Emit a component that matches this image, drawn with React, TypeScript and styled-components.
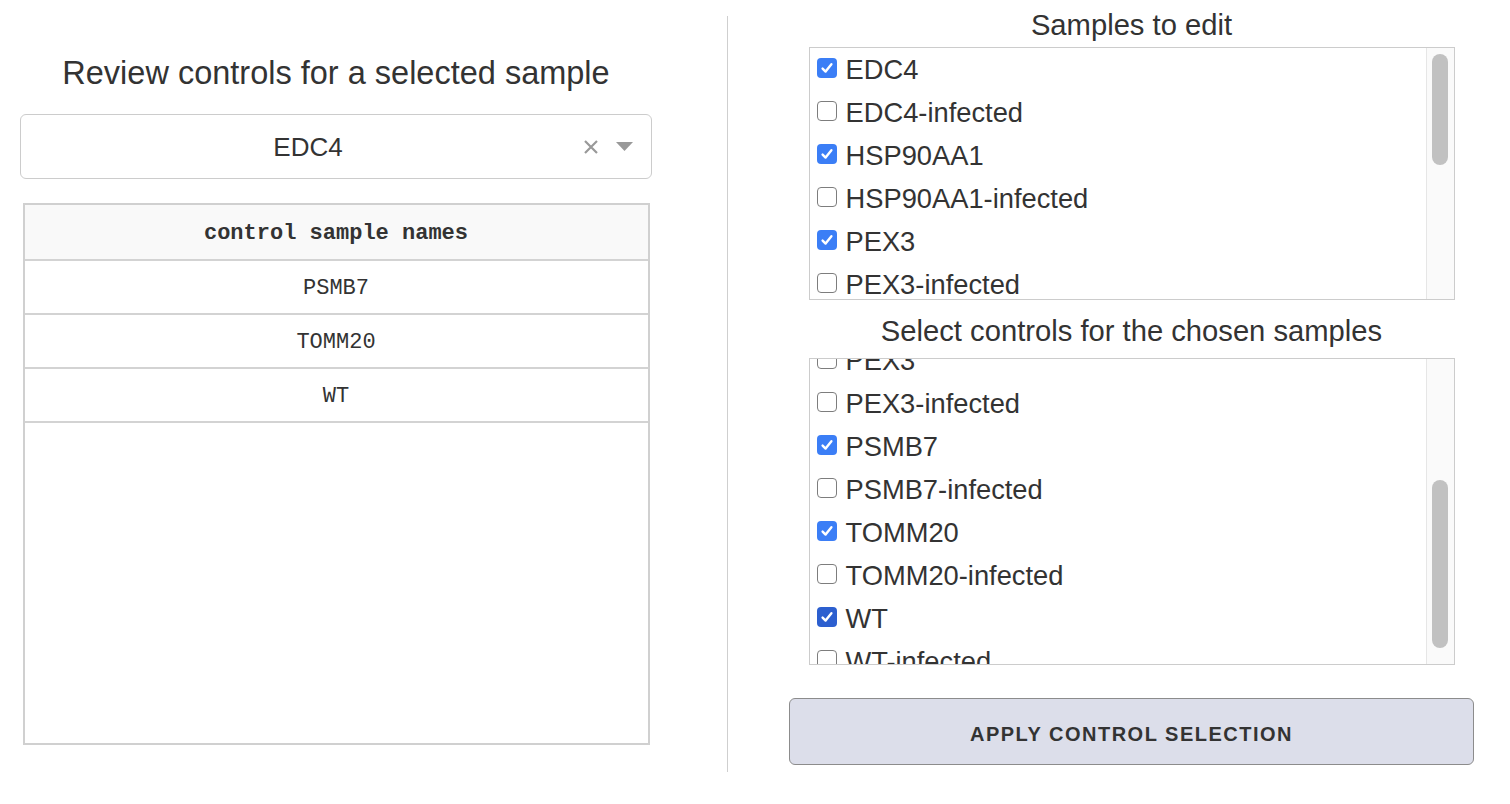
import React, {useEffect, useRef} from 'react';
import styled, {createGlobalStyle} from 'styled-components';

const GlobalStyle = createGlobalStyle`
  body {
    margin: 0;
    background: #fff;
    font-family: "Liberation Sans", Arial, sans-serif;
    color: #333;
  }
`;

const Page = styled.div`
  display: flex;
  align-items: flex-start;
  padding: 8px 0 0 20px;
`;

const LeftColumn = styled.div`
  width: 632px;
  margin-top: 45px;
  display: flex;
  flex-direction: column;
  align-items: center;
`;

const Divider = styled.div`
  width: 1px;
  height: 756px;
  margin: 8px 61px 0 75px;
  background: #cfcfcf;
`;

const RightColumn = styled.div`
  width: 685px;
  display: flex;
  flex-direction: column;
  align-items: center;
`;

const Title = styled.div<{ $size: number }>`
  font-size: ${p => p.$size}px;
  line-height: 34px;
  height: 34px;
  color: #333;
  white-space: nowrap;
`;

const BigTitle = styled(Title)`
  line-height: 40px;
  height: 40px;
  margin-bottom: 21px;
`;

const Select = styled.div`
  box-sizing: border-box;
  width: 632px;
  height: 65px;
  border: 1px solid #ccc;
  border-radius: 6px;
  display: flex;
  align-items: center;
  padding-right: 18px;
`;

const SelectValue = styled.div`
  flex: 1;
  text-align: center;
  padding: 2px 0 0 12px;
  font-size: 26px;
  color: #333;
`;

const Indicators = styled.div`
  display: flex;
  align-items: center;
  gap: 17px;
`;

const Table = styled.div`
  box-sizing: border-box;
  margin-top: 24px;
  width: 627px;
  height: 542px;
  border: 2px solid #d0d0d0;
  font-family: "Courier New", "Liberation Mono", monospace;
  font-size: 22px;
  color: #333;
`;

const Cell = styled.div<{ $head?: boolean }>`
  box-sizing: border-box;
  height: ${p => (p.$head ? 56 : 54)}px;
  padding-top: 3px;
  display: flex;
  align-items: center;
  justify-content: center;
  border-bottom: 2px solid #d3d3d3;
  background: ${p => (p.$head ? '#f9f9f9' : '#fff')};
  font-weight: ${p => (p.$head ? 700 : 400)};
`;

const ListFrame = styled.div<{ $height: number }>`
  position: relative;
  box-sizing: border-box;
  width: 646px;
  height: ${p => p.$height}px;
  border: 1px solid #ccc;
  background: #fff;
`;

const ListBox = styled.div`
  height: 100%;
  overflow: hidden;
  padding-right: 28px;
`;

const ScrollTrack = styled.div`
  position: absolute;
  top: 0;
  right: 0;
  bottom: 0;
  width: 28px;
  box-sizing: border-box;
  background: #fafafa;
  border-left: 1px solid #e6e6e6;
`;

const ScrollThumb = styled.div`
  position: absolute;
  left: 5px;
  width: 16px;
  border-radius: 8px;
  background: #c1c1c1;
`;

const Row = styled.label`
  display: flex;
  align-items: center;
  height: 43px;
  padding-left: 7px;
  gap: 9px;
  font-size: 27.3px;
  color: #333;
  white-space: nowrap;
`;

const Box = styled.span<{ $checked: boolean; $focus?: boolean }>`
  box-sizing: border-box;
  width: 20px;
  height: 20px;
  flex: none;
  border-radius: 4px;
  display: flex;
  align-items: center;
  justify-content: center;
  background: ${p => (p.$checked ? (p.$focus ? '#2c5fcf' : '#3b7ef6') : '#fff')};
  border: ${p => (p.$checked ? 'none' : '1.5px solid #7d7d7d')};
  margin-top: -4px;
`;

const Gap = styled.div<{ $h: number }>`
  height: ${p => p.$h}px;
  flex: none;
`;

const ApplyButton = styled.button`
  box-sizing: border-box;
  width: 685px;
  height: 67px;
  padding-top: 6px;
  border: 1px solid #8c8c8c;
  border-radius: 6px;
  background: #dcdeea;
  font-family: "Liberation Sans", Arial, sans-serif;
  font-weight: 700;
  font-size: 20px;
  letter-spacing: 1.5px;
  color: #333;
  cursor: pointer;
`;

const samples = [
  'EDC4', 'EDC4-infected', 'HSP90AA1', 'HSP90AA1-infected', 'PEX3', 'PEX3-infected',
  'PSMB7', 'PSMB7-infected', 'TOMM20', 'TOMM20-infected', 'WT', 'WT-infected',
];

const editChecked = ['EDC4', 'HSP90AA1', 'PEX3'];
const controlChecked = ['PSMB7', 'TOMM20', 'WT'];

const Check = () => (
  <svg width="14" height="14" viewBox="0 0 14 14">
    <path d="M2.6 7.6 L5.6 10.6 L11.4 3.2" fill="none" stroke="#fff" strokeWidth="2.4" strokeLinecap="round" strokeLinejoin="round" />
  </svg>
);

type listProps = {
  items: string[],
  checked: string[],
  height: number,
  thumb: { top: number, size: number },
  scrollTop?: number,
  focused?: string
}

const CheckList = ({items, checked, height, thumb, scrollTop, focused}: listProps) => {
  const ref = useRef<HTMLDivElement>(null);

  useEffect(() => {
    if (ref.current && scrollTop) ref.current.scrollTop = scrollTop;
  }, [scrollTop]);

  return (
    <ListFrame $height={height}>
      <ListBox ref={ref}>
        {items.map(name => {
          const on = checked.includes(name);
          return (
            <Row key={name}>
              <Box $checked={on} $focus={name === focused}>{on && <Check />}</Box>
              {name}
            </Row>
          );
        })}
      </ListBox>
      <ScrollTrack>
        <ScrollThumb style={{top: thumb.top, height: thumb.size}} />
      </ScrollTrack>
    </ListFrame>
  );
};

const App = () => {
  return (
    <>
      <GlobalStyle />
      <Page>
        <LeftColumn>
          <BigTitle $size={32.5}>Review controls for a selected sample</BigTitle>
          <Select>
            <SelectValue>EDC4</SelectValue>
            <Indicators>
              <svg width="16" height="16" viewBox="0 0 16 16">
                <path d="M2 2 L14 14 M14 2 L2 14" stroke="#999" strokeWidth="2.2" />
              </svg>
              <svg width="17" height="10" viewBox="0 0 17 10">
                <path d="M0 0 H17 L8.5 9 Z" fill="#999" />
              </svg>
            </Indicators>
          </Select>
          <Table>
            <Cell $head>control sample names</Cell>
            <Cell>PSMB7</Cell>
            <Cell>TOMM20</Cell>
            <Cell>WT</Cell>
          </Table>
        </LeftColumn>
        <Divider />
        <RightColumn>
          <Title $size={29.2}>Samples to edit</Title>
          <Gap $h={5} />
          <CheckList items={samples} checked={editChecked} height={253} thumb={{top: 6, size: 111}} />
          <Gap $h={14} />
          <Title $size={29.2}>Select controls for the chosen samples</Title>
          <Gap $h={10} />
          <CheckList
            items={samples}
            checked={controlChecked}
            height={307}
            thumb={{top: 121, size: 168}}
            scrollTop={192}
            focused="WT"
          />
          <Gap $h={33} />
          <ApplyButton>APPLY CONTROL SELECTION</ApplyButton>
        </RightColumn>
      </Page>
    </>
  );
};

export default App;
